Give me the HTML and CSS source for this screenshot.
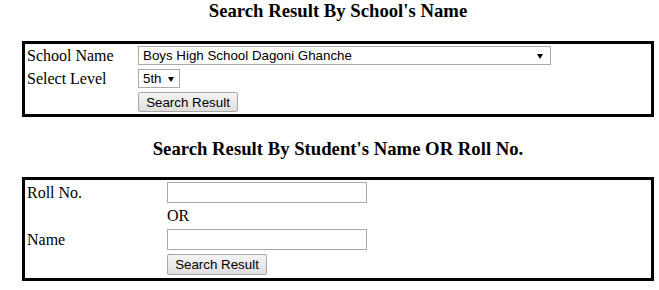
FILE: index.html
```html
<!DOCTYPE html>
<html>
<head>
<meta charset="utf-8">
<link rel="stylesheet" href="styles.css">
</head>
<body>
<div class="page">
  <h3 class="title title-first">Search Result By School's Name</h3>
  <form class="box box-school">
    <div class="label">School Name</div>
    <div class="ctrl"><span class="sel"><select class="select select-school"><option>Boys High School Dagoni Ghanche</option></select></span></div>
    <div class="label">Select Level</div>
    <div class="ctrl"><span class="sel sel-small"><select class="select select-level"><option>5th</option></select></span></div>
    <div class="ctrl col2"><button type="button" class="btn btn-school">Search Result</button></div>
  </form>
  <h3 class="title title-second">Search Result By Student's Name OR Roll No.</h3>
  <form class="box box-student">
    <div class="label">Roll No.</div>
    <div class="ctrl"><input type="text" class="field"></div>
    <div class="ctrl col2 or">OR</div>
    <div class="label">Name</div>
    <div class="ctrl"><input type="text" class="field"></div>
    <div class="ctrl col2 btn-row"><button type="button" class="btn btn-student">Search Result</button></div>
  </form>
</div>
</body>
</html>
```
FILE: styles.css
```css
html, body {
  margin: 0;
  padding: 0;
  background: #fff;
}
body {
  font-family: "Liberation Serif", "Times New Roman", serif;
  font-size: 16px;
  color: #000;
}
.page {
  width: 632px;
  padding-left: 22px;
}
.title {
  margin: 0;
  height: 21px;
  line-height: 21px;
  font-size: 18.72px;
  font-weight: bold;
  text-align: center;
}
.title-second {
  margin-top: 21px;
}
.box {
  margin: 0;
  border: 3px solid #000;
  display: grid;
  align-items: center;
  justify-items: start;
}
.box-school {
  margin-top: 20px;
  padding: 2px 2px 2px 2px;
  grid-template-columns: 111px 1fr;
  row-gap: 4px;
}
.box-student {
  margin-top: 18px;
  padding: 2px 2px 3px 2px;
  grid-template-columns: 140px 1fr;
  grid-template-rows: 21px 20px 21px 22px;
  row-gap: 3px;
}
.label {
  line-height: 18px;
}
.ctrl {
  display: flex;
  align-items: center;
}
.col2 {
  grid-column: 2;
}
.or {
  line-height: 18px;
}
.btn-row {
  align-self: end;
}
.sel {
  position: relative;
  display: inline-block;
}
.sel::after {
  content: "";
  position: absolute;
  right: 8px;
  top: 50%;
  margin-top: -2px;
  border-left: 3.5px solid transparent;
  border-right: 3.5px solid transparent;
  border-top: 5px solid #000;
  pointer-events: none;
}
.sel-small::after {
  right: 6px;
}
.select {
  -webkit-appearance: none;
  appearance: none;
  display: block;
  box-sizing: border-box;
  height: 19px;
  margin: 0;
  padding: 0 0 0 4px;
  border: 1px solid #a9a9a9;
  border-radius: 0;
  background: #fff;
  font-family: "Liberation Sans", Arial, sans-serif;
  font-size: 13.33px;
  line-height: 17px;
  color: #000;
}
.select-school {
  width: 413px;
}
.select-level {
  width: 42px;
}
.field {
  display: block;
  box-sizing: border-box;
  width: 200px;
  height: 21px;
  margin: 0;
  padding: 1px 2px;
  border: 1px solid #a9a9a9;
  background: #fff;
  font-family: "Liberation Sans", Arial, sans-serif;
  font-size: 13.33px;
}
.btn {
  display: block;
  box-sizing: border-box;
  width: 100px;
  margin: 0;
  padding: 0;
  border: 1px solid #a6a6a6;
  border-radius: 2px;
  background: linear-gradient(#f4f4f4, #dedede);
  font-family: "Liberation Sans", Arial, sans-serif;
  font-size: 13.33px;
  color: #000;
}
.btn-school {
  height: 20px;
}
.btn-student {
  height: 21px;
}
```
